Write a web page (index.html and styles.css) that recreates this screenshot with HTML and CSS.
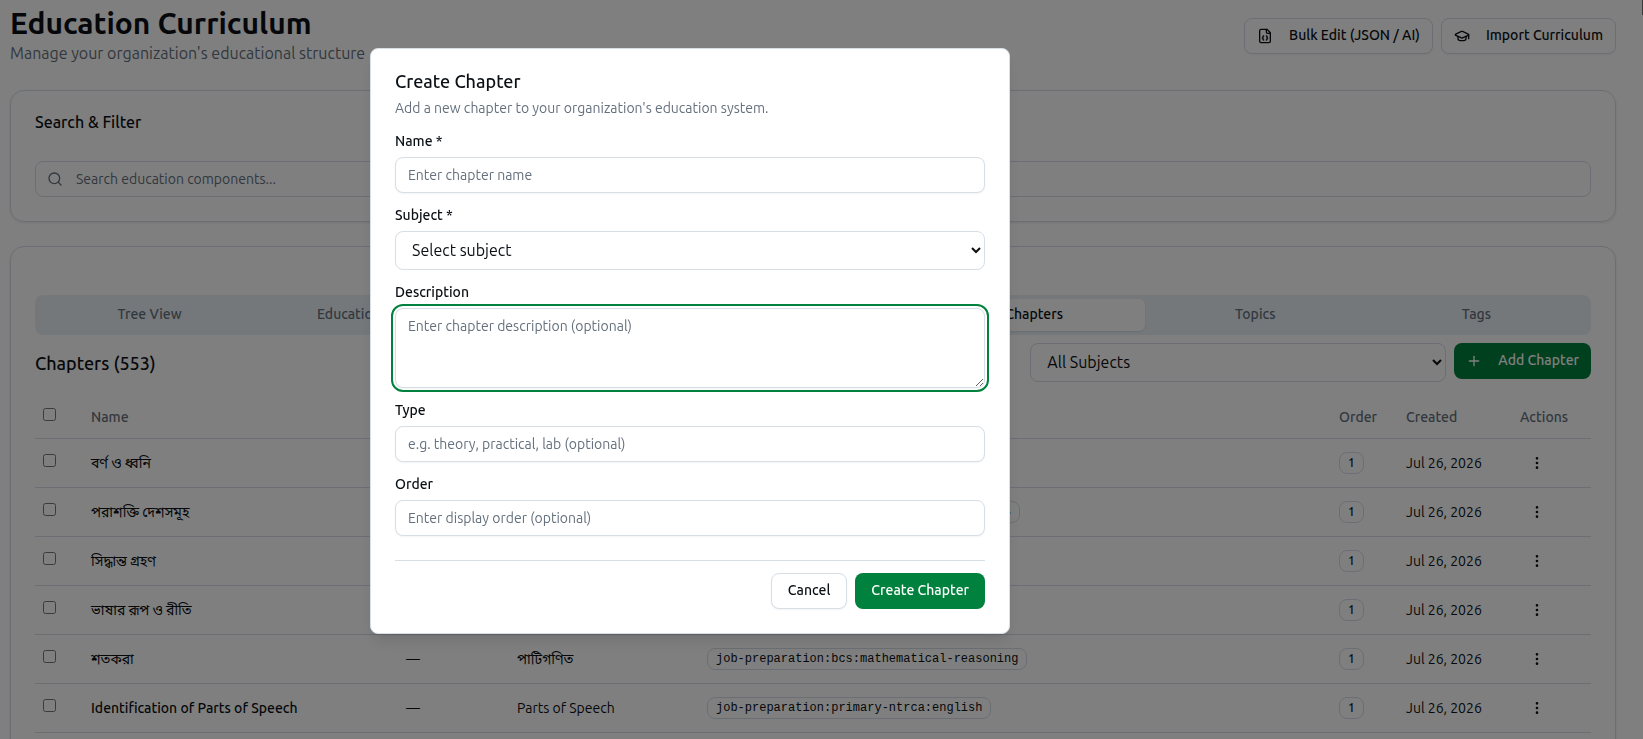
FILE: index.html
```html
<!DOCTYPE html>
<html lang="en">
<head>
<meta charset="utf-8">
<title>Education Curriculum</title>
<link rel="stylesheet" href="styles.css">
</head>
<body>
<main class="page">
  <header class="page-header">
    <div class="page-heading">
      <h1 class="page-title">Education Curriculum</h1>
      <p class="page-subtitle">Manage your organization's educational structure</p>
    </div>
    <div class="header-actions">
      <button type="button" class="btn btn-outline btn-icon">
        <svg class="icon" viewBox="0 0 24 24" aria-hidden="true"><path d="M15 2H6a2 2 0 0 0-2 2v16a2 2 0 0 0 2 2h12a2 2 0 0 0 2-2V7Z"/><path d="M14 2v4a2 2 0 0 0 2 2h4"/><path d="M10 12a1 1 0 0 0-1 1v1a1 1 0 0 1-1 1 1 1 0 0 1 1 1v1a1 1 0 0 0 1 1"/><path d="M14 18a1 1 0 0 0 1-1v-1a1 1 0 0 1 1-1 1 1 0 0 1-1-1v-1a1 1 0 0 0-1-1"/></svg>
        <span class="btn-label">Bulk Edit (JSON / AI)</span>
      </button>
      <button type="button" class="btn btn-outline btn-icon">
        <svg class="icon" viewBox="0 0 24 24" aria-hidden="true"><path d="M21.42 10.922a1 1 0 0 0-.019-1.838L12.83 5.18a2 2 0 0 0-1.66 0L2.6 9.08a1 1 0 0 0 0 1.832l8.57 3.908a2 2 0 0 0 1.66 0z"/><path d="M22 10v6"/><path d="M6 12.5V16a6 3 0 0 0 12 0v-3.5"/></svg>
        <span class="btn-label">Import Curriculum</span>
      </button>
    </div>
  </header>

  <section class="card">
    <h2 class="card-title">Search &amp; Filter</h2>
    <div class="search">
      <svg class="icon search-icon" viewBox="0 0 24 24" aria-hidden="true"><circle cx="11" cy="11" r="8"/><path d="m21 21-4.3-4.3"/></svg>
      <input class="search-input" type="text" aria-label="Search education components" placeholder="Search education components...">
    </div>
  </section>

  <section class="card card-tabs">
    <div class="tabs" role="tablist">
      <button type="button" class="tab" role="tab">Tree View</button>
      <button type="button" class="tab" role="tab">Education Levels</button>
      <button type="button" class="tab" role="tab">Programs</button>
      <button type="button" class="tab" role="tab">Subjects</button>
      <button type="button" class="tab tab-active" role="tab" aria-selected="true">Chapters</button>
      <button type="button" class="tab" role="tab">Topics</button>
      <button type="button" class="tab" role="tab">Tags</button>
    </div>

    <div class="toolbar">
      <h3 class="toolbar-title">Chapters (553)</h3>
      <div class="toolbar-actions">
        <select class="select toolbar-select" aria-label="Filter by subject"><option>All Subjects</option></select>
        <button type="button" class="btn btn-primary btn-icon">
          <svg class="icon" viewBox="0 0 24 24" aria-hidden="true"><path d="M5 12h14"/><path d="M12 5v14"/></svg>
          <span class="btn-label">Add Chapter</span>
        </button>
      </div>
    </div>

    <table class="table">
      <colgroup><col class="col-check"><col class="col-name"><col class="col-type"><col class="col-subject"><col><col class="col-order"><col class="col-created"><col class="col-actions"></colgroup>
      <thead>
        <tr><th><input type="checkbox" class="check" aria-label="Select all"></th><th>Name</th><th>Type</th><th>Subject</th><th>Path</th><th>Order</th><th>Created</th><th>Actions</th></tr>
      </thead>
      <tbody>
        <tr><td><input type="checkbox" class="check" aria-label="Select row"></td><td class="name" lang="bn">বর্ণ ও ধ্বনি</td><td>—</td><td>ব্যাকরণ</td><td><span class="badge mono">job-preparation:bcs:bangla</span></td><td><span class="badge">1</span></td><td>Jul 26, 2026</td><td><button type="button" class="row-menu" aria-label="Row actions"><svg class="icon" viewBox="0 0 24 24"><circle cx="12" cy="12" r="1"/><circle cx="12" cy="5" r="1"/><circle cx="12" cy="19" r="1"/></svg></button></td></tr>
        <tr><td><input type="checkbox" class="check" aria-label="Select row"></td><td class="name" lang="bn">পরাশক্তি দেশসমূহ</td><td>—</td><td>আন্তর্জাতিক</td><td><span class="badge mono">job-preparation:bcs:international-affairs</span></td><td><span class="badge">1</span></td><td>Jul 26, 2026</td><td><button type="button" class="row-menu" aria-label="Row actions"><svg class="icon" viewBox="0 0 24 24"><circle cx="12" cy="12" r="1"/><circle cx="12" cy="5" r="1"/><circle cx="12" cy="19" r="1"/></svg></button></td></tr>
        <tr><td><input type="checkbox" class="check" aria-label="Select row"></td><td class="name" lang="bn">সিদ্ধান্ত গ্রহণ</td><td>—</td><td>নৈতিকতা</td><td><span class="badge mono">job-preparation:bcs:ethics</span></td><td><span class="badge">1</span></td><td>Jul 26, 2026</td><td><button type="button" class="row-menu" aria-label="Row actions"><svg class="icon" viewBox="0 0 24 24"><circle cx="12" cy="12" r="1"/><circle cx="12" cy="5" r="1"/><circle cx="12" cy="19" r="1"/></svg></button></td></tr>
        <tr><td><input type="checkbox" class="check" aria-label="Select row"></td><td class="name" lang="bn">ভাষার রূপ ও রীতি</td><td>—</td><td>ব্যাকরণ</td><td><span class="badge mono">job-preparation:bcs:bangla</span></td><td><span class="badge">1</span></td><td>Jul 26, 2026</td><td><button type="button" class="row-menu" aria-label="Row actions"><svg class="icon" viewBox="0 0 24 24"><circle cx="12" cy="12" r="1"/><circle cx="12" cy="5" r="1"/><circle cx="12" cy="19" r="1"/></svg></button></td></tr>
        <tr><td><input type="checkbox" class="check" aria-label="Select row"></td><td class="name" lang="bn">শতকরা</td><td>—</td><td>পাটিগণিত</td><td><span class="badge mono">job-preparation:bcs:mathematical-reasoning</span></td><td><span class="badge">1</span></td><td>Jul 26, 2026</td><td><button type="button" class="row-menu" aria-label="Row actions"><svg class="icon" viewBox="0 0 24 24"><circle cx="12" cy="12" r="1"/><circle cx="12" cy="5" r="1"/><circle cx="12" cy="19" r="1"/></svg></button></td></tr>
        <tr><td><input type="checkbox" class="check" aria-label="Select row"></td><td class="name">Identification of Parts of Speech</td><td>—</td><td>Parts of Speech</td><td><span class="badge mono">job-preparation:primary-ntrca:english</span></td><td><span class="badge">1</span></td><td>Jul 26, 2026</td><td><button type="button" class="row-menu" aria-label="Row actions"><svg class="icon" viewBox="0 0 24 24"><circle cx="12" cy="12" r="1"/><circle cx="12" cy="5" r="1"/><circle cx="12" cy="19" r="1"/></svg></button></td></tr>
      </tbody>
    </table>
  </section>
</main>
<div class="scroll-thumb"></div>

<div class="overlay">
  <form class="dialog" role="dialog" aria-modal="true" aria-labelledby="dialog-title">
    <h2 class="dialog-title" id="dialog-title">Create Chapter</h2>
    <p class="dialog-text">Add a new chapter to your organization's education system.</p>
    <div class="fields">
      <div class="field"><label for="name">Name *</label><input class="input" id="name" type="text" placeholder="Enter chapter name"></div>
      <div class="field"><label for="subject">Subject *</label><select class="select" id="subject"><option>Select subject</option></select></div>
      <div class="field"><label for="description">Description</label><textarea class="input textarea" id="description" placeholder="Enter chapter description (optional)"></textarea></div>
      <div class="field"><label for="type">Type</label><input class="input" id="type" type="text" placeholder="e.g. theory, practical, lab (optional)"></div>
      <div class="field"><label for="order">Order</label><input class="input" id="order" type="text" placeholder="Enter display order (optional)"></div>
    </div>
    <div class="dialog-footer">
      <button type="button" class="btn btn-outline"><span class="btn-label">Cancel</span></button>
      <button type="submit" class="btn btn-primary"><span class="btn-label">Create Chapter</span></button>
    </div>
  </form>
</div>
</body>
</html>
```
FILE: styles.css
```css
:root {
  --border: #d6dee6;
  --muted: #64707d;
  --text: #0a0f14;
  --primary: #00813d;
  --font: Ubuntu, Roboto, "Noto Sans", "Noto Sans Bengali", sans-serif;
}

* { box-sizing: border-box; }

html, body { height: 100%; }

body {
  margin: 0;
  overflow: hidden;
  background: #fff;
  color: var(--text);
  font: 14px/20px var(--font);
}

h1, h2, h3, p { margin: 0; }

button, input, select, textarea { font-family: inherit; color: inherit; }

.page {
  display: flex;
  flex-direction: column;
  gap: 24px;
  padding: 5px 27px 0 10px;
}

.page-header {
  display: flex;
  align-items: center;
  justify-content: space-between;
  min-height: 61px;
}

.page-heading { align-self: flex-start; }
.page-title { font-size: 30px; line-height: 36px; font-weight: 700; }
.page-subtitle { font-size: 16px; line-height: 24px; color: var(--muted); }
.header-actions { display: flex; gap: 8px; }

.icon {
  flex: none;
  width: 16px;
  height: 16px;
  fill: none;
  stroke: currentColor;
  stroke-width: 2;
  stroke-linecap: round;
  stroke-linejoin: round;
}

.btn {
  display: inline-flex;
  align-items: center;
  justify-content: center;
  height: 36px;
  padding: 0 16px;
  border: 0;
  border-radius: 8px;
  font-size: 14px;
  line-height: 20px;
  font-weight: 500;
  white-space: nowrap;
}
.btn-label { padding-bottom: 2px; }
.btn-icon { gap: 16px; padding: 0 12px; }
.btn-outline { background: #fff; border: 1px solid var(--border); box-shadow: 0 1px 2px rgba(0, 0, 0, .05); }
.btn-primary { background: var(--primary); color: #fff; }

.card {
  display: flex;
  flex-direction: column;
  padding: 24px;
  border: 1px solid var(--border);
  border-radius: 14px;
  box-shadow: 0 1px 3px rgba(0, 0, 0, .1);
}
.card-tabs { padding-top: 48px; }
.card-title { margin-bottom: 32px; font-size: 16px; line-height: 14px; font-weight: 550; }

.search { position: relative; }
.search-icon { position: absolute; left: 12px; top: 10px; color: var(--muted); }
.search-input {
  display: block;
  width: 100%;
  height: 36px;
  padding: 0 12px 0 40px;
  border: 1px solid var(--border);
  border-radius: 8px;
  background: #fff;
  font-size: 14px;
}

::placeholder { color: var(--muted); opacity: 1; }

.tabs {
  display: grid;
  grid-template-columns: repeat(7, 1fr);
  padding: 4px;
  border-radius: 8px;
  background: #e9f1f7;
}
.tab {
  height: 32px;
  padding: 0 0 2px;
  border: 0;
  border-radius: 6px;
  background: transparent;
  color: var(--muted);
  font-size: 14px;
  font-weight: 500;
}
.tab-active { background: #fff; color: var(--text); box-shadow: 0 1px 2px rgba(0, 0, 0, .1); }

.toolbar {
  display: flex;
  align-items: center;
  justify-content: space-between;
  margin: 8px 0 16px;
}
.toolbar-title { font-size: 18px; line-height: 28px; font-weight: 500; }
.toolbar-actions { display: flex; align-items: flex-start; gap: 8px; }
.toolbar-select { width: 416px; }

.select {
  height: 39px;
  padding: 0 12px 1px;
  border: 1px solid var(--border);
  border-radius: 8px;
  background: #fff;
  font-size: 16px;
}

.table { width: 100%; border-collapse: collapse; table-layout: fixed; }
.table th, .table td { padding: 0 8px; border-bottom: 1px solid var(--border); text-align: left; vertical-align: middle; }
.table th { height: 40px; padding-bottom: 2px; color: var(--muted); font-weight: 500; }
.table td { height: 49px; }
.col-check { width: 48px; }
.col-name { width: 315px; }
.col-type { width: 111px; }
.col-subject { width: 190px; }
.col-order { width: 67px; }
.col-created { width: 114px; }
.col-actions { width: 79px; }
.name { font-weight: 500; }
.name:lang(bn) { font-weight: 400; }
.check { display: block; width: 13px; height: 13px; margin: 0 0 4px; }

.badge {
  display: inline-block;
  padding: 2px 8px;
  border: 1px solid var(--border);
  border-radius: 8px;
  font-size: 12px;
  line-height: 16px;
  font-weight: 500;
}
.mono { font-family: "Liberation Mono", monospace; }

.row-menu {
  display: flex;
  align-items: center;
  justify-content: center;
  width: 34px;
  height: 32px;
  padding: 0;
  border: 0;
  background: transparent;
}

.scroll-thumb {
  position: fixed;
  top: 0;
  right: 0;
  width: 1px;
  height: 15px;
  background: #777;
}

.overlay {
  position: fixed;
  inset: 0;
  display: flex;
  align-items: flex-start;
  justify-content: center;
  padding: 48px 263px 0 0;
  background: rgba(0, 0, 0, .5);
}

.dialog {
  width: 640px;
  padding: 24px;
  border: 1px solid var(--border);
  border-radius: 8px;
  background: #fff;
  box-shadow: 0 10px 15px -3px rgba(0, 0, 0, .1), 0 4px 6px -4px rgba(0, 0, 0, .1);
}
.dialog-title { font-size: 18px; line-height: 16px; font-weight: 550; }
.dialog-text { margin-top: 9px; color: var(--muted); }

.fields { display: flex; flex-direction: column; gap: 14px; margin-top: 15px; }
.field { display: flex; flex-direction: column; gap: 8px; }
.field label { line-height: 16px; font-weight: 500; }

.input {
  height: 36px;
  padding: 0 12px;
  border: 1px solid var(--border);
  border-radius: 8px;
  background: #fff;
  font-size: 14px;
  box-shadow: 0 1px 2px rgba(0, 0, 0, .05);
}
.textarea {
  height: 80px;
  padding: 7px 12px;
  line-height: 20px;
  outline: 2px solid var(--primary);
  outline-offset: 2px;
}

.dialog-footer {
  display: flex;
  justify-content: flex-end;
  gap: 8px;
  margin-top: 24px;
  padding-top: 12px;
  border-top: 1px solid var(--border);
}
```
